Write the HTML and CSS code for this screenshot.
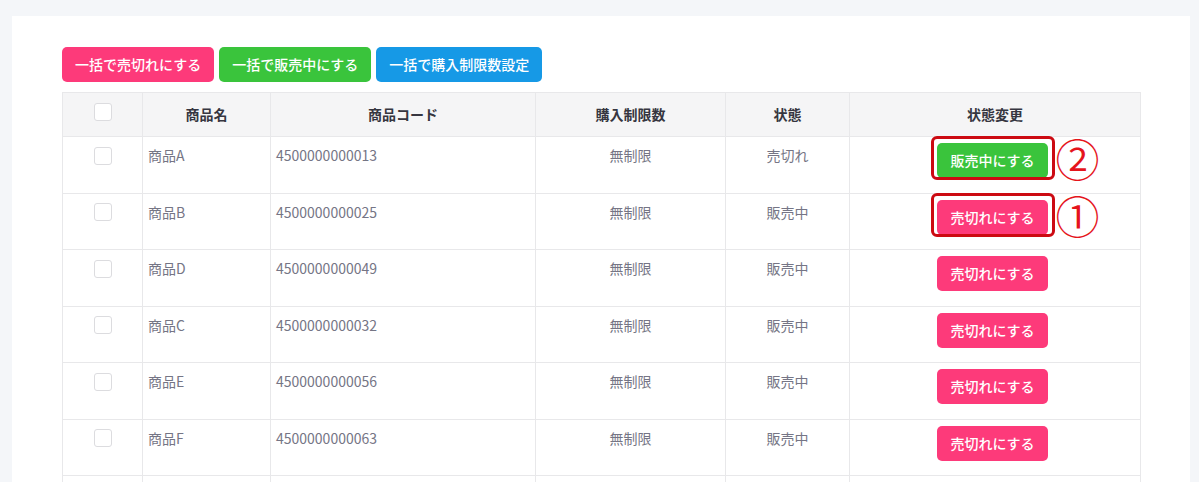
FILE: index.html
```html
<!DOCTYPE html>
<html lang="ja">
<head>
<meta charset="utf-8">
<title>商品一覧</title>
<link rel="stylesheet" href="styles.css">
</head>
<body>
<div class="card">
  <div class="bulk">
    <button class="btn pink">一括で売切れにする</button>
    <button class="btn green">一括で販売中にする</button>
    <button class="btn blue">一括で購入制限数設定</button>
  </div>
  <table class="grid">
    <colgroup>
      <col class="c-check"><col class="c-name"><col class="c-code"><col class="c-limit"><col class="c-state"><col class="c-action">
    </colgroup>
    <thead>
      <tr class="head">
        <th><span class="cb"></span></th>
        <th>商品名</th>
        <th>商品コード</th>
        <th>購入制限数</th>
        <th>状態</th>
        <th>状態変更</th>
      </tr>
    </thead>
    <tbody>
      <tr class="row">
        <td class="center"><span class="cb"></span></td>
        <td>商品A</td>
        <td>4500000000013</td>
        <td class="center">無制限</td>
        <td class="center">売切れ</td>
        <td class="action"><span class="mark"><button class="btn green">販売中にする</button><span class="num">②</span></span></td>
      </tr>
      <tr class="row">
        <td class="center"><span class="cb"></span></td>
        <td>商品B</td>
        <td>4500000000025</td>
        <td class="center">無制限</td>
        <td class="center">販売中</td>
        <td class="action"><span class="mark"><button class="btn pink">売切れにする</button><span class="num">①</span></span></td>
      </tr>
      <tr class="row">
        <td class="center"><span class="cb"></span></td>
        <td>商品D</td>
        <td>4500000000049</td>
        <td class="center">無制限</td>
        <td class="center">販売中</td>
        <td class="action"><button class="btn pink">売切れにする</button></td>
      </tr>
      <tr class="row">
        <td class="center"><span class="cb"></span></td>
        <td>商品C</td>
        <td>4500000000032</td>
        <td class="center">無制限</td>
        <td class="center">販売中</td>
        <td class="action"><button class="btn pink">売切れにする</button></td>
      </tr>
      <tr class="row">
        <td class="center"><span class="cb"></span></td>
        <td>商品E</td>
        <td>4500000000056</td>
        <td class="center">無制限</td>
        <td class="center">販売中</td>
        <td class="action"><button class="btn pink">売切れにする</button></td>
      </tr>
      <tr class="row">
        <td class="center"><span class="cb"></span></td>
        <td>商品F</td>
        <td>4500000000063</td>
        <td class="center">無制限</td>
        <td class="center">販売中</td>
        <td class="action"><button class="btn pink">売切れにする</button></td>
      </tr>
      <tr class="row">
        <td class="center"></td>
        <td></td>
        <td></td>
        <td class="center"></td>
        <td class="center"></td>
        <td class="action"><button class="btn pink" aria-label="売切れにする"></button></td>
      </tr>
    </tbody>
  </table>
</div>
</body>
</html>
```

FILE: styles.css
```css
* { box-sizing: border-box; }
html, body { height: 100%; }
body {
  margin: 0;
  padding: 16px 9px 0 12px;
  background: #f4f6f9;
  font-family: "Noto Sans CJK JP", "Noto Sans", sans-serif;
  font-size: 14px;
  color: #757585;
  overflow: hidden;
}
.card {
  background: #fff;
  padding: 31px 50px 40px 50px;
  min-height: 600px;
}
.bulk {
  display: flex;
  gap: 5px;
  margin-bottom: 10px;
}
.btn {
  display: inline-block;
  height: 35px;
  min-width: 110px;
  padding: 0 13px;
  border: none;
  border-radius: 5px;
  font-family: "Noto Sans CJK JP", sans-serif;
  font-size: 14px;
  font-weight: 500;
  line-height: 35px;
  color: #fff;
  cursor: pointer;
  vertical-align: top;
}
.pink { background: #fd3a7a; }
.green { background: #3ac43c; }
.blue { background: #1699e6; }

.grid {
  width: 1078px;
  table-layout: fixed;
  border-collapse: collapse;
}
.c-check { width: 80px; }
.c-name { width: 128px; }
.c-code { width: 265px; }
.c-limit { width: 190px; }
.c-state { width: 124px; }
.c-action { width: 291px; }

.grid th, .grid td {
  border: 1px solid #e8e8ea;
}
.head { height: 44px; background: #f5f5f6; }
.grid th {
  font-weight: 700;
  color: #363640;
  text-align: center;
  vertical-align: middle;
  padding: 0 6px 2px;
}
.row { height: 56.5px; }
.grid td {
  vertical-align: top;
  padding: 6px 5px 0;
  line-height: 25px;
  text-align: left;
}
.grid td.center { text-align: center; }
.grid td.action { text-align: center; padding: 6px 10px 0 5px; }

.cb {
  display: inline-block;
  width: 18px;
  height: 18px;
  border: 1px solid #dcdcdf;
  border-radius: 3px;
  background: #fff;
  vertical-align: middle;
  margin-top: -3px;
}
.head .cb { margin-top: -8px; }

.mark {
  position: relative;
  display: inline-block;
  vertical-align: top;
}
.mark::after {
  content: "";
  position: absolute;
  top: -7px;
  left: -6px;
  right: -7px;
  bottom: -2px;
  border: 3px solid #cc0a12;
  border-radius: 6px;
  pointer-events: none;
}
.num {
  position: absolute;
  left: 118px;
  top: -3px;
  font-size: 44px;
  line-height: 36px;
  color: #e5141c;
  font-weight: 350;
}
```
